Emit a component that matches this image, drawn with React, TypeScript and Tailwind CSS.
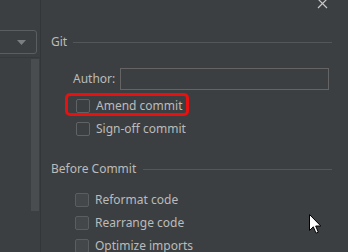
import React from "react";

const Check = ({ filled }: { filled?: boolean }) => (
  <div
    className={
      "w-[14px] h-[14px] rounded-[2px] border shrink-0 " +
      (filled ? "border-[#5a5e60] bg-[#43474a]" : "border-[#606366] bg-[#3c3f41]")
    }
  />
);

const Row = ({ label, filled, ml }: { label: string; filled?: boolean; ml: string }) => (
  <div className={"flex items-center h-[23px] gap-[6px] shrink-0 " + ml}>
    <Check filled={filled} />
    <span>{label}</span>
  </div>
);

export default function App() {
  return (
    <div
      className="relative w-[348px] h-[252px] overflow-hidden bg-[#3c3f41] text-[#bbbbbb] text-[12px] flex"
      style={{ fontFamily: '"Noto Sans", "Open Sans", sans-serif' }}
    >
      {/* left column */}
      <div className="w-[41px] shrink-0 flex flex-col pt-[30px] border-r border-[#333537]">
        <div className="-ml-[4px] w-[41px] h-[24px] shrink-0 border border-[#5b5e60] rounded-[3px] flex items-center justify-end pr-[10px]">
          <svg width="9" height="5" viewBox="0 0 9 5">
            <path d="M0 0 L9 0 L4.5 5 Z" fill="#7c7f81" />
          </svg>
        </div>
        <div className="mt-[3px] flex-1 flex justify-end border-t border-[#36393b]">
          <div className="w-[8px] mr-[1px] mt-[1px] h-[152px] bg-[#4a4d4f]" />
        </div>
      </div>

      {/* right content */}
      <div className="flex-1 pl-[10px] pr-[16px] pt-[34px] flex flex-col leading-[16px] min-h-0">
        <div className="flex items-center h-[16px] shrink-0">
          <span>Git</span>
          <div className="flex-1 h-px bg-[#52575a] ml-[6px]" />
        </div>

        <div className="flex items-center h-[22px] shrink-0 mt-[18px] ml-[22px] mr-[3px]">
          <span className="w-[47px]">Author:</span>
          <div className="flex-1 h-[22px] border border-[#646464]" />
        </div>

        <div className="relative mt-[4px] shrink-0">
          <Row label="Amend commit" ml="ml-[25px]" />
          <div className="absolute left-[14px] top-[-1px] w-[124px] h-[23px] border-[3px] border-[#e8110f] rounded-[5px]" />
        </div>
        <Row label="Sign-off commit" ml="ml-[25px]" />

        <div className="flex items-center h-[16px] shrink-0 mt-[21px]">
          <span>Before Commit</span>
          <div className="flex-1 h-px bg-[#52575a] ml-[7px]" />
        </div>

        <div className="mt-[11px] shrink-0">
          <Row label="Reformat code" filled ml="ml-[24px]" />
          <Row label="Rearrange code" filled ml="ml-[24px]" />
          <Row label="Optimize imports" filled ml="ml-[24px]" />
        </div>
      </div>

      {/* close button */}
      <svg className="absolute left-[317px] top-[-1px]" width="11" height="10" viewBox="0 0 11 10">
        <path d="M1 0 L10 9 M10 0 L1 9" stroke="#c8c8c8" strokeWidth="1.2" />
      </svg>

      {/* mouse cursor */}
      <svg className="absolute left-[309px] top-[214px]" width="13" height="21" viewBox="0 0 13 21">
        <path
          d="M0.5 0.5 L0.5 16.5 L4.3 12.8 L7 19.2 L9.3 18.2 L6.7 12 L11.8 12 Z"
          fill="#ffffff"
          stroke="#000000"
          strokeWidth="1"
          strokeLinejoin="miter"
        />
      </svg>
    </div>
  );
}
